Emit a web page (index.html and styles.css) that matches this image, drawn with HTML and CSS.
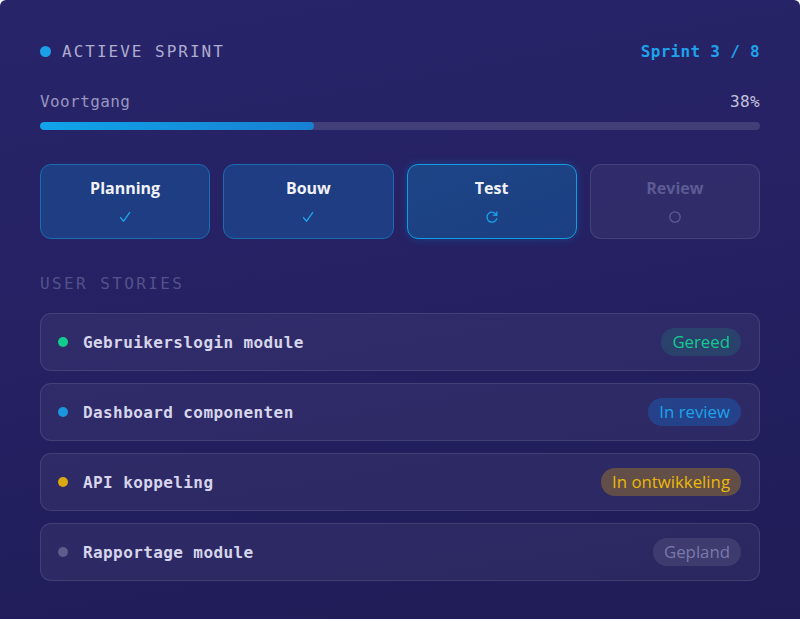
FILE: index.html
```html
<!DOCTYPE html>
<html lang="nl">
<head>
<meta charset="utf-8">
<title>Actieve sprint</title>
<link rel="stylesheet" href="styles.css">
</head>
<body>
<main class="card">
  <header class="head">
    <div class="head-left"><span class="live-dot"></span><span class="title">ACTIEVE SPRINT</span></div>
    <div class="sprint-no">Sprint 3 / 8</div>
  </header>

  <section class="progress">
    <div class="progress-label"><span>Voortgang</span><span class="pct">38%</span></div>
    <div class="track"><div class="fill" style="width:38%"></div></div>
  </section>

  <section class="phases">
    <div class="phase done">
      <div class="phase-name">Planning</div>
      <svg class="phase-icon" viewBox="0 0 16 16"><path d="M3.5 8.6 L6.6 12.2 L12.6 3.6" fill="none" stroke="#1ea2ea" stroke-width="1.4" stroke-linecap="round" stroke-linejoin="round"/></svg>
    </div>
    <div class="phase done">
      <div class="phase-name">Bouw</div>
      <svg class="phase-icon" viewBox="0 0 16 16"><path d="M3.5 8.6 L6.6 12.2 L12.6 3.6" fill="none" stroke="#1ea2ea" stroke-width="1.4" stroke-linecap="round" stroke-linejoin="round"/></svg>
    </div>
    <div class="phase active">
      <div class="phase-name">Test</div>
      <svg class="phase-icon" viewBox="0 0 16 16"><path d="M12.6 6.2 A5 5 0 1 0 12.8 9.6" fill="none" stroke="#1ea2ea" stroke-width="1.3" stroke-linecap="round"/><path d="M12.9 2.9 L12.8 6.4 L9.4 6.2" fill="none" stroke="#1ea2ea" stroke-width="1.3" stroke-linecap="round" stroke-linejoin="round"/></svg>
    </div>
    <div class="phase todo">
      <div class="phase-name">Review</div>
      <svg class="phase-icon" viewBox="0 0 16 16"><circle cx="8" cy="8" r="5.2" fill="none" stroke="#5d5b93" stroke-width="1.3"/></svg>
    </div>
  </section>

  <h2 class="section-title">USER STORIES</h2>

  <ul class="stories">
    <li class="story"><span class="dot green"></span><span class="story-name">Gebruikerslogin module</span><span class="badge b-green">Gereed</span></li>
    <li class="story"><span class="dot blue"></span><span class="story-name">Dashboard componenten</span><span class="badge b-blue">In review</span></li>
    <li class="story"><span class="dot yellow"></span><span class="story-name">API koppeling</span><span class="badge b-yellow">In ontwikkeling</span></li>
    <li class="story"><span class="dot grey"></span><span class="story-name">Rapportage module</span><span class="badge b-grey">Gepland</span></li>
  </ul>
</main>
</body>
</html>
```

FILE: styles.css
```css
* { box-sizing: border-box; }

html, body {
  margin: 0;
  padding: 0;
  background: #ffffff;
}

body {
  font-family: "DejaVu Sans Mono", "Liberation Mono", monospace;
  color: #d9d8f0;
}

.card {
  width: 800px;
  height: 619px;
  border-radius: 6px 6px 0 0;
  background: linear-gradient(170deg, #28246a 0%, #252163 45%, #1f1c57 100%);
  padding: 39px 40px 0 40px;
  display: flex;
  flex-direction: column;
}

.head {
  display: flex;
  justify-content: space-between;
  align-items: center;
  height: 24px;
}

.head-left {
  display: flex;
  align-items: center;
  gap: 11px;
}

.live-dot {
  width: 11px;
  height: 11px;
  border-radius: 50%;
  background: #1ba0e8;
}

.title {
  font-size: 16px;
  letter-spacing: 2px;
  color: #aeadd0;
}

.sprint-no {
  font-size: 16px;
  font-weight: bold;
  letter-spacing: 0.3px;
  color: #1ea2ea;
}

.progress {
  margin-top: 27px;
}

.progress-label {
  display: flex;
  justify-content: space-between;
  font-size: 16px;
  line-height: 24px;
  letter-spacing: 0.4px;
  color: #9796c0;
}

.pct { color: #c3c2de; }

.track {
  margin-top: 8px;
  height: 8px;
  border-radius: 4px;
  background: rgba(255, 255, 255, 0.13);
  overflow: hidden;
}

.fill {
  height: 100%;
  border-radius: 4px;
  background: linear-gradient(90deg, #10a4ea, #1880d2);
}

.phases {
  margin-top: 34px;
  display: grid;
  grid-template-columns: repeat(4, 1fr);
  gap: 13px;
}

.phase {
  height: 75px;
  border-radius: 11px;
  border: 1px solid;
  padding: 12px 0 0 0;
  display: flex;
  flex-direction: column;
  align-items: center;
  font-family: "Open Sans", "Noto Sans", sans-serif;
}

.phase-name {
  font-size: 16px;
  font-weight: 700;
  line-height: 22px;
  color: #f1f1fb;
}

.phase-icon {
  margin-top: 10px;
  width: 16px;
  height: 16px;
}

.phase.done {
  background: #1f3d82;
  border-color: #1b6cb0;
}

.phase.active {
  background: linear-gradient(160deg, #1d4586, #1b3f82);
  border-color: #119fe4;
  box-shadow: 0 0 10px rgba(20, 160, 230, 0.25);
}

.phase.todo {
  background: rgba(255, 255, 255, 0.05);
  border-color: rgba(255, 255, 255, 0.10);
}

.phase.todo .phase-name { color: #5d5b93; }

.section-title {
  margin: 33px 0 0 0;
  font-size: 16px;
  font-weight: normal;
  line-height: 24px;
  letter-spacing: 2.4px;
  color: #54528b;
}

.stories {
  list-style: none;
  margin: 17px 0 0 0;
  padding: 0;
  display: flex;
  flex-direction: column;
  gap: 13px;
}

.story {
  height: 58px;
  border-radius: 11px;
  border: 1px solid rgba(255, 255, 255, 0.10);
  background: rgba(255, 255, 255, 0.05);
  display: flex;
  align-items: center;
  padding: 0 18px 0 17px;
}

.stories { gap: 12px; }

.dot {
  width: 10px;
  height: 10px;
  border-radius: 50%;
  flex: none;
}

.dot.green { background: #12cc8e; }
.dot.blue { background: #1b95de; }
.dot.yellow { background: #d8a910; }
.dot.grey { background: #5d5c8c; }

.story-name {
  margin-left: 15px;
  font-size: 16px;
  letter-spacing: 0.4px;
  font-weight: bold;
  color: #d6d5ec;
  flex: 1;
}

.badge {
  font-family: "Open Sans", "Noto Sans", sans-serif;
  font-size: 16.8px;
  line-height: 28px;
  height: 28px;
  padding: 0 11px;
  border-radius: 14px;
}

.b-green { background: rgba(16, 185, 129, 0.16); color: #15c992; }
.b-blue { background: rgba(14, 130, 233, 0.28); color: #1ea2ea; }
.b-yellow { background: rgba(200, 150, 20, 0.35); color: #eab90a; }
.b-grey { background: rgba(255, 255, 255, 0.09); color: #7a79a9; }
```
